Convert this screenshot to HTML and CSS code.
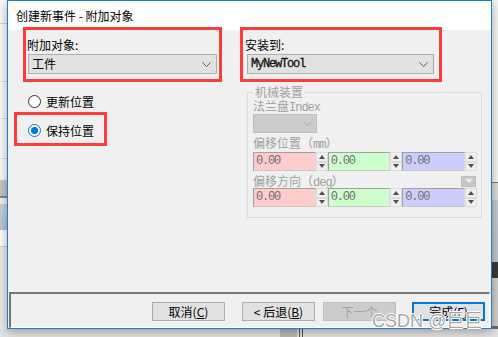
FILE: index.html
```html
<!DOCTYPE html>
<html lang="zh-CN">
<head>
    <meta charset="UTF-8">
    <title>创建新事件 - 附加对象</title>
    <link rel="stylesheet" href="styles.css">
</head>
<body>
    <div class="desk">
        <div class="bg-left"></div>
        <div class="bg-right"></div>
        <div class="bg-bottom">
            <span class="bg-block"></span>
            <span class="bg-rule"></span>
            <span class="bg-rule"></span>
        </div>

        <div class="dialog">
            <div class="titlebar">创建新事件 - 附加对象</div>
            <div class="dlg-body">
                <div class="content">
                    <div class="field">
                        <div class="lbl">附加对象:</div>
                        <div class="select select-left">
                            <span>工件</span>
                            <svg class="chev" width="9" height="5" viewBox="0 0 9 5"><polyline points="0.5,0.5 4.5,4.5 8.5,0.5" fill="none" stroke="#5a5a5a" stroke-width="1"/></svg>
                        </div>
                    </div>
                    <div class="field">
                        <div class="lbl">安装到:</div>
                        <div class="select select-right">
                            <span class="mono tool">MyNewTool</span>
                            <svg class="chev" width="9" height="5" viewBox="0 0 9 5"><polyline points="0.5,0.5 4.5,4.5 8.5,0.5" fill="none" stroke="#5a5a5a" stroke-width="1"/></svg>
                        </div>
                    </div>

                    <div class="radios">
                        <div class="radio-row"><span class="radio"></span>更新位置</div>
                        <div class="radio-row"><span class="radio checked"></span>保持位置</div>
                    </div>

                    <fieldset class="group">
                        <legend>机械装置</legend>
                        <div class="g-lbl">法兰盘<span class="mono">Index</span></div>
                        <div class="combo-off">
                            <svg class="chev" width="9" height="5" viewBox="0 0 9 5"><polyline points="0.5,0.5 4.5,4.5 8.5,0.5" fill="none" stroke="#b0b0b0" stroke-width="1"/></svg>
                        </div>
                        <div class="g-lbl gap">偏移位置（<span class="mono">mm</span>）</div>
                        <div class="spin-row">
                            <div class="spin-field pink">0.00</div>
                            <div class="spin"><span class="up"></span><span class="down"></span></div>
                            <div class="spin-field green">0.00</div>
                            <div class="spin"><span class="up"></span><span class="down"></span></div>
                            <div class="spin-field blue">0.00</div>
                            <div class="spin"><span class="up"></span><span class="down"></span></div>
                        </div>
                        <div class="g-head">
                            <div class="g-lbl">偏移方向（<span class="mono">deg</span>）</div>
                            <span class="drop-btn"></span>
                        </div>
                        <div class="spin-row">
                            <div class="spin-field pink">0.00</div>
                            <div class="spin"><span class="up"></span><span class="down"></span></div>
                            <div class="spin-field green">0.00</div>
                            <div class="spin"><span class="up"></span><span class="down"></span></div>
                            <div class="spin-field blue">0.00</div>
                            <div class="spin"><span class="up"></span><span class="down"></span></div>
                        </div>
                    </fieldset>
                </div>

                <div class="button-bar">
                    <button class="btn">取消(<u>C</u>)</button>
                    <button class="btn btn-back">&lt;&nbsp;后退(<u>B</u>)</button>
                    <button class="btn btn-next" disabled>下一个</button>
                    <button class="btn btn-finish">完成(<u>F</u>)</button>
                </div>
            </div>
        </div>

        <!-- annotation boxes -->
        <div class="mark mark-attach"></div>
        <div class="mark mark-mount"></div>
        <div class="mark mark-keep"></div>

        <div class="watermark">CSDN @巨巨</div>
    </div>
</body>
</html>
```

FILE: styles.css
```css
body {
    margin: 0;
    font-family: "Noto Sans CJK SC", "Noto Sans", sans-serif;
    font-size: 12px;
    color: #000;
    overflow: hidden;
}

.desk {
    position: relative;
    width: 498px;
    height: 337px;
    background: #ececec;
    overflow: hidden;
}

/* window behind the dialog */
.bg-left {
    position: absolute;
    left: 0;
    top: 0;
    width: 8px;
    height: 337px;
    background: linear-gradient(to bottom,
        #fbfbfb 0, #fbfbfb 23px, #d9d9d9 23px, #d9d9d9 24px,
        #fafafa 24px, #fafafa 81px, #e2e2e2 81px, #e2e2e2 82px,
        #fafafa 82px, #fafafa 118px, #e2e2e2 118px, #e2e2e2 119px,
        #fafafa 119px, #fafafa 158px, #e2e2e2 158px, #e2e2e2 159px,
        #fafafa 159px, #fafafa 180px, #cacaca 180px, #c4c4c4 196px,
        #8a8a8a 196px, #8a8a8a 198px, #f0f0f0 198px, #f0f0f0 204px,
        #c9d3de 204px, #b9c5d2 230px, #fdfdfd 230px, #fdfdfd 246px,
        #cfcfcf 246px, #cfcfcf 247px, #ececec 247px);
}

.bg-right {
    position: absolute;
    left: 491px;
    top: 0;
    width: 7px;
    height: 337px;
    background: linear-gradient(to bottom,
        #f7f7f7 0, #f7f7f7 182px, #7a7a7a 182px, #7a7a7a 183px,
        #dcdcdc 183px, #dcdcdc 200px, #c3ccd6 200px, #bcc6d0 262px,
        #3a3a3a 262px, #3a3a3a 278px, #cfcfcf 278px, #cfcfcf 326px,
        #6a6a6a 326px);
}

.bg-bottom {
    position: absolute;
    left: 0;
    top: 329px;
    width: 498px;
    height: 8px;
    background: #e2e2e2;
    display: flex;
}

.bg-block {
    margin-left: 280px;
    width: 17px;
    background: #b8b8b8;
}

.bg-rule {
    width: 1px;
    margin-left: 2px;
    background: #555;
}

/* dialog */
.dialog {
    position: absolute;
    left: 7px;
    top: 0;
    width: 485px;
    height: 329px;
    box-sizing: border-box;
    border: 1px solid #1a7fd4;
    background: #f0f0f0;
    box-shadow: 0 2px 10px rgba(0, 0, 0, 0.35);
    display: flex;
    flex-direction: column;
}

.titlebar {
    height: 29px;
    line-height: 29px;
    padding-left: 8px;
    background: #fff;
    font-size: 12px;
    color: #000;
}

.dlg-body {
    flex: 1;
    display: flex;
    flex-direction: column;
}

.content {
    flex: 1;
    display: grid;
    grid-template-columns: 218px 1fr;
    grid-template-rows: 36px 1fr;
    row-gap: 11px;
    padding: 8px 0 0 19px;
    align-items: start;
}

.lbl {
    line-height: 14px;
    height: 14px;
    margin-bottom: 2px;
}

.select {
    height: 20px;
    box-sizing: border-box;
    border: 1px solid #adadad;
    background: #e1e1e1;
    display: flex;
    align-items: center;
    justify-content: space-between;
    padding: 0 5px 0 3px;
    line-height: 18px;
}

.select-left {
    width: 189px;
    margin-left: 1px;
}

.select-right {
    width: 187px;
    margin-left: 2px;
}

.mono {
    font-family: "Liberation Mono", monospace;
    letter-spacing: -1px;
}

.tool {
    letter-spacing: -1.2px;
    color: #111;
    -webkit-text-stroke: 0.3px #111;
}

.chev {
    display: block;
}

/* radios */
.radios {
    margin-top: 9px;
    padding-left: 1px;
    display: flex;
    flex-direction: column;
    gap: 14px;
}

.radio-row {
    height: 15px;
    line-height: 15px;
    display: flex;
    align-items: center;
    gap: 5px;
}

.radio {
    width: 13px;
    height: 13px;
    box-sizing: border-box;
    border: 1px solid #333;
    border-radius: 50%;
    background: #fff;
    display: flex;
    align-items: center;
    justify-content: center;
}

.radio.checked {
    border-color: #0078d7;
}

.radio.checked::after {
    content: "";
    width: 7px;
    height: 7px;
    border-radius: 50%;
    background: #0078d7;
}

/* disabled group */
.group {
    margin: 0 0 0 2px;
    width: 235px;
    box-sizing: border-box;
    min-width: 0;
    padding: 0 4px 10px 5px;
    border: 1px solid #dcdcdc;
    color: #a0a0a0;
}

.group legend {
    padding: 0 2px;
    line-height: 14px;
    font-size: 12px;
}

.g-lbl {
    line-height: 14px;
    height: 14px;
}

.g-lbl.gap {
    margin-top: 3px;
    margin-bottom: 2px;
}

.combo-off {
    margin-top: 1px;
    width: 64px;
    height: 19px;
    box-sizing: border-box;
    border: 1px solid #bfbfbf;
    background: #cccccc;
    display: flex;
    align-items: center;
    justify-content: flex-end;
    padding-right: 4px;
}

.g-head {
    margin-top: 3px;
    display: flex;
    justify-content: space-between;
    align-items: center;
}

.drop-btn {
    width: 15px;
    height: 11px;
    box-sizing: border-box;
    border: 1px solid #bdbdbd;
    background: #c8c8c8;
    margin-right: 1px;
    display: flex;
    align-items: center;
    justify-content: center;
}

.drop-btn::after {
    content: "";
    border-left: 4px solid transparent;
    border-right: 4px solid transparent;
    border-top: 4px solid #ececec;
}

.spin-row {
    display: flex;
    height: 19px;
}

.spin-field {
    flex: 1;
    box-sizing: border-box;
    border: 1px solid;
    border-color: #a0a0a0 #dcdcdc #c8c8c8 #a0a0a0;
    padding-left: 2px;
    font-family: "Liberation Mono", monospace;
    font-size: 12px;
    letter-spacing: -1.2px;
    line-height: 17px;
    color: #707070;
}

.pink { background: #ffcccc; }
.green { background: #ccffcc; }
.blue { background: #ccccff; }

.spin {
    width: 12px;
    display: flex;
    flex-direction: column;
}

.spin span {
    flex: 1;
    box-sizing: border-box;
    border: 1px solid #dcdcdc;
    background: #f0f0f0;
    display: flex;
    align-items: center;
    justify-content: center;
}

.spin .up::after {
    content: "";
    border-left: 3px solid transparent;
    border-right: 3px solid transparent;
    border-bottom: 4px solid #505050;
}

.spin .down::after {
    content: "";
    border-left: 3px solid transparent;
    border-right: 3px solid transparent;
    border-top: 4px solid #505050;
}

/* bottom button bar */
.button-bar {
    height: 36px;
    box-sizing: border-box;
    margin: 0 1px;
    border-top: 2px solid #767676;
    border-left: 2px solid #767676;
    border-right: 1px solid #fff;
    border-bottom: 1px solid #fff;
    display: flex;
    justify-content: flex-end;
    align-items: flex-start;
    padding: 8px 4px 0 0;
}

.btn {
    width: 73px;
    height: 19px;
    box-sizing: border-box;
    border: 1px solid #adadad;
    background: #e1e1e1;
    font-family: inherit;
    font-size: 12px;
    line-height: 15px;
    padding: 0;
    color: #000;
}

.btn-back {
    margin-left: 17px;
}

.btn-next {
    margin-left: 8px;
    background: #cccccc;
    border-color: #bfbfbf;
    color: #a3a3a3;
}

.btn-finish {
    margin-left: 16px;
    border: 2px solid #0078d7;
}

/* red annotation frames */
.mark {
    position: absolute;
    box-sizing: border-box;
    border: 3px solid #fc3b3b;
}

.mark-attach {
    left: 23px;
    top: 27px;
    width: 199px;
    height: 55px;
}

.mark-mount {
    left: 240px;
    top: 27px;
    width: 202px;
    height: 55px;
}

.mark-keep {
    left: 14px;
    top: 112px;
    width: 93px;
    height: 34px;
}

.watermark {
    position: absolute;
    left: 372px;
    top: 311px;
    font-family: "Liberation Sans", "Noto Sans CJK SC", sans-serif;
    font-size: 18px;
    line-height: 20px;
    color: rgba(150, 150, 150, 0.85);
    text-shadow: -1px 0 #fff, 1px 0 #fff, 0 -1px #fff, 0 1px #fff;
    white-space: nowrap;
}
```
